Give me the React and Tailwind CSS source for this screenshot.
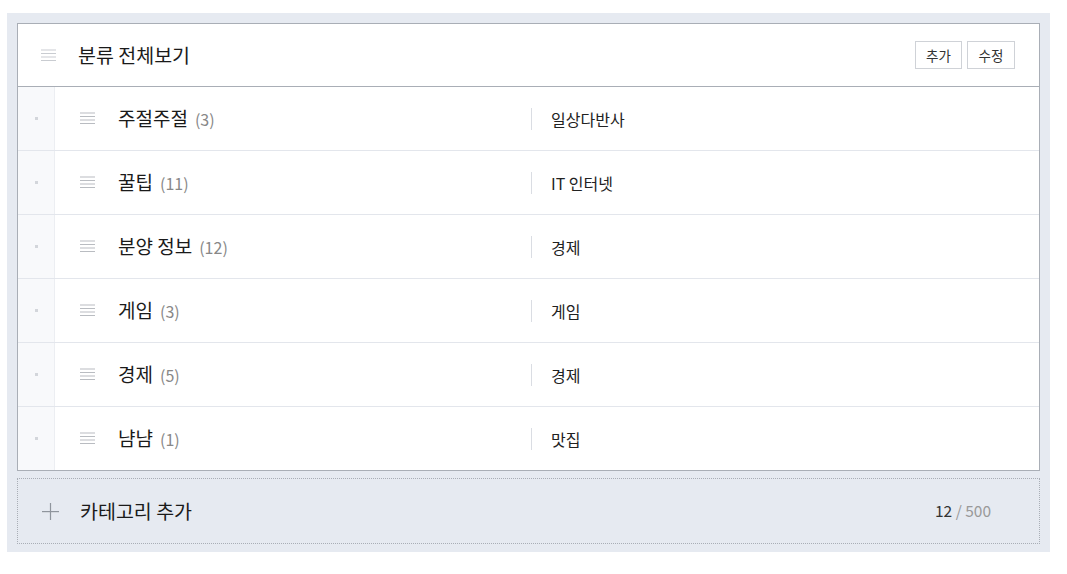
import React from "react";

const categories = [
  { name: "주절주절", count: 3, group: "일상다반사" },
  { name: "꿀팁", count: 11, group: "IT 인터넷" },
  { name: "분양 정보", count: 12, group: "경제" },
  { name: "게임", count: 3, group: "게임" },
  { name: "경제", count: 5, group: "경제" },
  { name: "냠냠", count: 1, group: "맛집" },
];

const DragIcon = ({ color = "#c9ccd1" }) => (
  <svg width="15" height="13" viewBox="0 0 15 13">
    <rect x="0" y="0.5" width="15" height="1" fill={color} />
    <rect x="0" y="4" width="15" height="1" fill={color} />
    <rect x="0" y="7.5" width="15" height="1" fill={color} />
    <rect x="0" y="11" width="15" height="1" fill={color} />
  </svg>
);

const CategoryRow = (props) => {
  return (
    <div className="flex h-[64px] border-b border-[#e3e6ec] last:border-b-0 last:h-[63px]">
      <div className="w-[37px] flex items-center justify-center bg-[#f8f9fb] border-r border-[#eceef2]">
        <span className="w-[3px] h-[3px] bg-[#d3d6db]"></span>
      </div>
      <div className="flex-1 flex items-center">
        <div className="w-[476px] flex items-center pl-[25px]">
          <DragIcon color="#b9bcc1" />
          <span className="ml-[23px] text-[19px] text-[#1a1a1a]">{props.name}</span>
          <span className="ml-[7px] text-[16px] text-[#888]">({props.count})</span>
        </div>
        <div className="h-[22px] w-px bg-[#dadde3]"></div>
        <span className="ml-[19px] text-[16px] text-[#222]">{props.group}</span>
      </div>
    </div>
  );
};

export default function App() {
  return (
    <div
      className="w-[1067px] h-[574px] bg-white pt-[13px] pl-[7px]"
      style={{ fontFamily: '"Noto Sans CJK KR", "Noto Sans", sans-serif' }}
    >
      <div className="w-[1043px] bg-[#e6eaf1] p-[10px] pb-[8px]">
        <div className="bg-white border border-[#a9aeb6]">
          <div className="h-[63px] flex items-center pl-[23px] pr-[24px] border-b border-[#a9aeb6]">
            <DragIcon color="#c9ccd1" />
            <span className="ml-[22px] text-[19.5px] text-[#1a1a1a]">분류 전체보기</span>
            <div className="ml-auto flex gap-[5px]">
              <button className="w-[47px] h-[28px] border border-[#cfd2d7] text-[13.5px] text-[#333] bg-white">
                추가
              </button>
              <button className="w-[48px] h-[28px] border border-[#cfd2d7] text-[13.5px] text-[#333] bg-white">
                수정
              </button>
            </div>
          </div>
          {categories.map((c, i) => (
            <CategoryRow key={i} name={c.name} count={c.count} group={c.group} />
          ))}
        </div>
        <div className="mt-[7px] h-[66px] flex items-center border border-dotted border-[#a9aeb6] pl-[24px] pr-[48px]">
          <svg width="17" height="17" viewBox="0 0 17 17">
            <rect x="0" y="8" width="17" height="1.2" fill="#8f959d" />
            <rect x="7.9" y="0" width="1.2" height="17" fill="#8f959d" />
          </svg>
          <span className="ml-[21px] text-[19.5px] text-[#1a1a1a]">카테고리 추가</span>
          <span className="ml-auto text-[15.5px] text-[#999]">
            <span className="text-[#333]">12</span> / 500
          </span>
        </div>
      </div>
    </div>
  );
}
